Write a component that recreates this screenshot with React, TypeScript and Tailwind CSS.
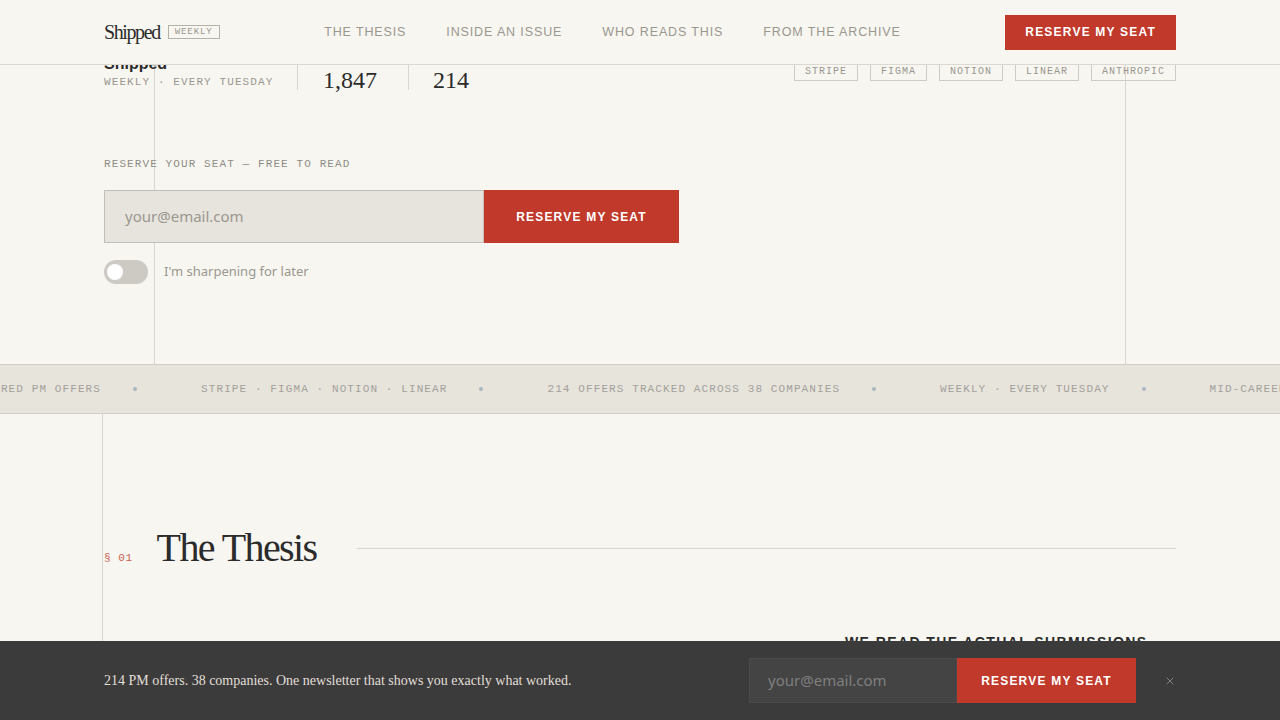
import { X } from "lucide-react";

const serif = "font-['Liberation_Serif',serif]";
const mono = "font-['Liberation_Mono',monospace]";
const sans = "font-['Liberation_Sans',Arial,sans-serif]";
const body = "font-['Noto_Sans',sans-serif]";

const navItems = ["THE THESIS", "INSIDE AN ISSUE", "WHO READS THIS", "FROM THE ARCHIVE"];
const companies = ["STRIPE", "FIGMA", "NOTION", "LINEAR", "ANTHROPIC"];
const ticker = [
  "UNFILTERED PM OFFERS",
  "STRIPE · FIGMA · NOTION · LINEAR",
  "214 OFFERS TRACKED ACROSS 38 COMPANIES",
  "WEEKLY · EVERY TUESDAY",
  "MID-CAREER PM OFFERS",
];

function Header() {
  return (
    <header className="absolute inset-x-0 top-0 z-20 h-[65px] border-b border-[#dcd9d2] bg-[#f7f6f1]">
      <div className="flex h-16 items-center justify-between px-[104px]">
        <div className="flex items-center gap-2">
          <span className={`${serif} text-[20px] leading-none tracking-[-0.07em] text-[#2b2b2b]`}>Shipped</span>
          <span className={`${mono} border border-[#b5b2ab] px-[6px] text-[9px] leading-[12px] tracking-[0.1em] text-[#9a978f]`}>
            WEEKLY
          </span>
        </div>
        <nav className="flex items-center gap-10">
          {navItems.map((n) => (
            <span key={n} className={`${sans} text-[12.5px] tracking-[0.07em] text-[#9a978f]`}>
              {n}
            </span>
          ))}
        </nav>
        <button className={`${sans} h-[35px] bg-[#c0392b] px-5 text-[12px] font-bold tracking-[0.1em] text-white`}>
          RESERVE MY SEAT
        </button>
      </div>
    </header>
  );
}

function Hero() {
  return (
    <section className="relative h-[364px]">
      <div className="absolute bottom-0 left-[154px] top-0 w-px bg-[#d9d6cf]" />
      <div className="absolute bottom-0 left-[1125px] top-0 w-px bg-[#d9d6cf]" />
      <div className="relative px-[104px] pt-[46px]">
        <div className="flex h-[44px] items-end">
          <div className="w-[193px]">
            <div className={`${sans} text-[16px] font-bold leading-5 text-[#2b2b2b]`}>Shipped</div>
            <div className={`${mono} text-[11px] leading-4 tracking-[0.1em] text-[#9a978f]`}>
              WEEKLY · EVERY TUESDAY
            </div>
          </div>
          <div className="flex h-[44px] w-[111px] items-end border-l border-[#d9d6cf] pl-[25px]">
            <span className={`${serif} text-[24px] leading-[20px] text-[#2b2b2b]`}>1,847</span>
          </div>
          <div className="flex h-[44px] items-end border-l border-[#d9d6cf] pl-[24px]">
            <span className={`${serif} text-[24px] leading-[20px] text-[#2b2b2b]`}>214</span>
          </div>
          <div className="ml-auto flex gap-3 self-start pt-[15px]">
            {companies.map((c) => (
              <span
                key={c}
                className={`${mono} flex h-5 items-center border border-[#cfccc5] px-[10px] text-[10px] tracking-[0.1em] text-[#9a978f]`}
              >
                {c}
              </span>
            ))}
          </div>
        </div>

        <div className={`${mono} mt-[66px] text-[11px] leading-4 tracking-[0.1em] text-[#8f8c85]`}>
          RESERVE YOUR SEAT — FREE TO READ
        </div>
        <div className="mt-[18px] flex h-[53px] w-[575px]">
          <div className={`${body} flex w-[380px] items-center border border-[#c2bfb8] bg-[#e7e4dd] px-5 text-[15px] text-[#9a978f]`}>
            your@email.com
          </div>
          <button className={`${sans} flex-1 bg-[#c0392b] text-[12px] font-bold tracking-[0.1em] text-white`}>
            RESERVE MY SEAT
          </button>
        </div>
        <div className="mt-[17px] flex items-center gap-4">
          <div className="flex h-6 w-11 items-center rounded-full bg-[#cdcac3] px-[3px]">
            <div className="h-4 w-4 rounded-full bg-white" />
          </div>
          <span className={`${body} text-[13px] text-[#9a978f]`}>I'm sharpening for later</span>
        </div>
      </div>
    </section>
  );
}

function Ticker() {
  return (
    <div className="flex h-[50px] items-center overflow-hidden whitespace-nowrap border-y border-[#d2cfc8] bg-[#e7e4dc]">
      <div className="-ml-[53px] flex items-center">
        {ticker.map((t) => (
          <div key={t} className="flex items-center">
            <span className={`${mono} text-[11px] tracking-[0.1em] text-[#a3a09a]`}>{t}</span>
            <span className="ml-8 mr-16 h-1 w-1 rounded-full bg-[#aab6c1]" />
          </div>
        ))}
      </div>
    </div>
  );
}

function Thesis() {
  return (
    <section className="relative h-[306px]">
      <div className="absolute bottom-0 left-[102px] top-0 w-px bg-[#d9d6cf]" />
      <div className="relative px-[104px] pt-[110px]">
        <div className="flex items-baseline">
          <span className={`${mono} text-[11px] tracking-[0.05em] text-[#c9604f]`}>§ 01</span>
          <h2 className={`${serif} ml-[24px] text-[40px] leading-[48px] tracking-[-0.04em] text-[#2b2b2b]`}>
            The Thesis
          </h2>
          <div className="ml-10 h-px flex-1 self-center bg-[#d9d6cf]" />
        </div>
        <div className="mt-[60px] flex">
          <div className="ml-auto w-[331px]">
            <div className={`${sans} text-[14px] font-bold tracking-[0.1em] text-[#2b2b2b]`}>
              WE READ THE ACTUAL SUBMISSIONS
            </div>
          </div>
        </div>
      </div>
    </section>
  );
}

function StickyBar() {
  return (
    <div className="absolute inset-x-0 bottom-0 z-20 flex h-[79px] items-center justify-between bg-[#3b3b3b] px-[104px]">
      <p className={`${serif} text-[14px] text-[#e2dfd8]`}>
        214 PM offers. 38 companies. One newsletter that shows you exactly what worked.
      </p>
      <div className="flex items-center">
        <div className={`${body} flex h-[45px] w-[208px] items-center border border-[#4a4a4a] bg-[#444444] px-[18px] text-[15px] text-[#7f7f7f]`}>
          your@email.com
        </div>
        <button className={`${sans} h-[45px] w-[179px] bg-[#c0392b] text-[12px] font-bold tracking-[0.1em] text-white`}>
          RESERVE MY SEAT
        </button>
        <X className="ml-[28px] h-3 w-3 text-[#9a9a9a]" strokeWidth={1.5} />
      </div>
    </div>
  );
}

export default function App() {
  return (
    <div className="relative h-[720px] w-[1280px] overflow-hidden bg-[#f7f6f1]">
      <Header />
      <Hero />
      <Ticker />
      <Thesis />
      <StickyBar />
    </div>
  );
}
